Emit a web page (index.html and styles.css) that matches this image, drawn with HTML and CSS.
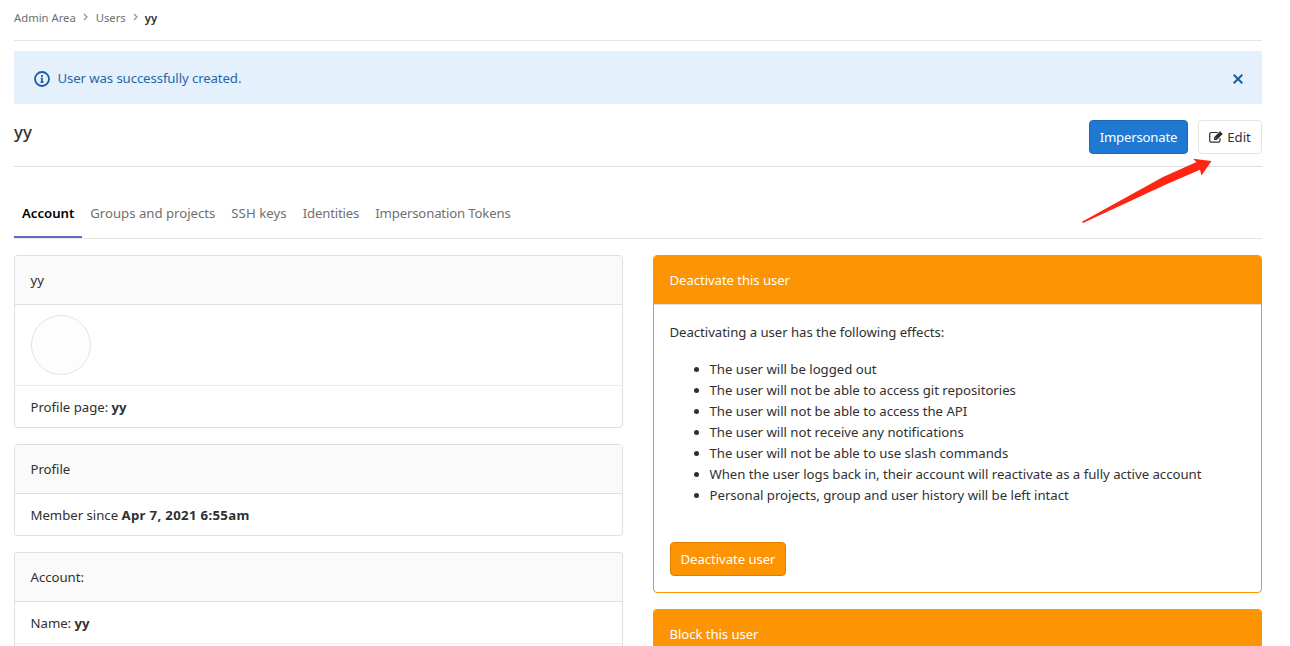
FILE: index.html
```
<!DOCTYPE html>
<html lang="en">
<head>
<meta charset="utf-8">
<title>yy · Users · Admin Area</title>
<link rel="stylesheet" href="styles.css">
</head>
<body>
<main class="page">
  <nav class="breadcrumbs">
    <a class="crumb">Admin Area</a>
    <svg class="chevron" viewBox="0 0 5 8"><path d="M1 1l3 3-3 3"/></svg>
    <a class="crumb">Users</a>
    <svg class="chevron" viewBox="0 0 5 8"><path d="M1 1l3 3-3 3"/></svg>
    <span class="crumb crumb-current">yy</span>
  </nav>
  <div class="alert">
    <svg class="info" viewBox="0 0 16 16"><circle cx="8" cy="8" r="7"/><path d="M8 4.1v1.8M6.8 7.5H8V11M6.6 11.2h2.8"/></svg>
    <span class="alert-text">User was successfully created.</span>
    <svg class="close" viewBox="0 0 12 12"><path d="M1.7 1.7l8.6 8.6M10.3 1.7l-8.6 8.6"/></svg>
  </div>
  <header class="title-bar">
    <h1 class="title">yy</h1>
    <div class="actions">
      <a class="btn btn-primary">Impersonate</a>
      <a class="btn btn-default"><svg class="pencil" viewBox="0 0 14 12"><path class="box" d="M11 7.2v2.3a1.7 1.7 0 0 1-1.7 1.7H2.4A1.7 1.7 0 0 1 .7 9.5V3.2A1.7 1.7 0 0 1 2.4 1.5H8.8"/><path class="pen" d="M11.1.3L13.8 2.9 7.7 9H5V6.3z"/><path class="nib" d="M6 6.6l1.3 1.3"/></svg>Edit</a>
      <svg class="arrow" viewBox="0 0 132 66"><path d="M1 63.800L82 19 115.500 4 112 .8 130.500 3 120.500 17.600 119 11.700 86 26 2 65z"/></svg>
    </div>
  </header>
  <nav class="tabs">
    <a class="tab active">Account</a>
    <a class="tab">Groups and projects</a>
    <a class="tab tab-wide">SSH keys</a>
    <a class="tab tab-tight">Identities</a>
    <a class="tab tab-tight">Impersonation Tokens</a>
  </nav>
  <div class="columns">
    <div class="column">
      <section class="card">
        <div class="card-header">yy</div>
        <div class="row row-avatar"><div class="avatar"></div></div>
        <div class="row row-last">Profile page: <b>yy</b></div>
      </section>
      <section class="card">
        <div class="card-header">Profile</div>
        <div class="row row-last">Member since <b class="date">Apr 7, 2021 6:55am</b></div>
      </section>
      <section class="card card-open">
        <div class="card-header">Account:</div>
        <div class="row">Name: <b>yy</b></div>
      </section>
    </div>
    <div class="column">
      <section class="card card-warning">
        <div class="card-header">Deactivate this user</div>
        <div class="card-body">
          <p class="intro">Deactivating a user has the following effects:</p>
          <ul class="effects">
            <li>The user will be logged out</li>
            <li>The user will not be able to access git repositories</li>
            <li>The user will not be able to access the API</li>
            <li>The user will not receive any notifications</li>
            <li>The user will not be able to use slash commands</li>
            <li>When the user logs back in, their account will reactivate as a fully active account</li>
            <li>Personal projects, group and user history will be left intact</li>
          </ul>
          <a class="btn btn-warning">Deactivate user</a>
        </div>
      </section>
      <section class="card card-warning card-open">
        <div class="card-header header-open">Block this user</div>
      </section>
    </div>
  </div>
</main>
</body>
</html>
```
FILE: styles.css
```
* { box-sizing: border-box; }
body {
  margin: 0;
  height: 646px;
  overflow: hidden;
  background: #fff;
  color: #303030;
  font-family: "Noto Sans", sans-serif;
  font-size: 13.2px;
  letter-spacing: -0.02px;
  line-height: 20px;
  white-space: nowrap;
}
.page { display: flex; flex-direction: column; width: 1248px; height: 646px; margin-left: 14px; }
svg { fill: none; flex: none; }

.breadcrumbs {
  display: flex;
  align-items: center;
  height: 41px;
  padding-bottom: 4px;
  border-bottom: 1px solid #e5e5e5;
  font-size: 11.3px;
  color: #707070;
}
.chevron { width: 5px; height: 8px; margin: 0 8px 3px 7px; stroke: #919191; stroke-width: 1.2; }
.crumb-current { margin-left: -1px; color: #303030; font-weight: 600; }

.alert {
  display: flex;
  align-items: center;
  height: 53px;
  margin-top: 10px;
  padding: 0 18px 0 20px;
  background: #e4f0fb;
  color: #2865a9;
}
.info { width: 16px; height: 16px; margin: 3px 7.5px 0 0; stroke: #1b5ca0; stroke-width: 1.8; }
.info path { stroke-width: 1.7; }
.alert-text { flex: 1; padding-top: 1px; letter-spacing: -0.1px; }
.close { width: 12px; height: 12px; margin-top: 2px; stroke: #1b5ca0; stroke-width: 2; }

.title-bar {
  display: flex;
  justify-content: space-between;
  height: 63px;
  padding-top: 16px;
  border-bottom: 1px solid #dfdfdf;
}
.title { margin: 0; font-size: 17px; line-height: 23px; font-weight: 500; color: #303030; }
.actions { position: relative; display: flex; gap: 10px; }
.btn {
  display: flex;
  align-items: center;
  justify-content: center;
  height: 34px;
  border: 1px solid;
  border-radius: 4px;
}
.btn-primary { width: 99px; background: #1f78d1; border-color: #1b69b6; color: #fff; letter-spacing: -0.2px; }
.btn-default { width: 64px; background: #fff; border-color: #e5e5e5; color: #303030; }
.btn-warning { width: 116px; background: #fc9403; border-color: #de7e00; color: #fff; letter-spacing: -0.08px; }
.pencil { width: 14px; height: 12px; margin-right: 4px; }
.pencil .box { stroke: #303030; stroke-width: 1.2; }
.pencil .pen { fill: #303030; }
.pencil .nib { stroke: #fff; stroke-width: .6; }
.arrow { position: absolute; right: 49px; top: 38px; width: 132px; height: 66px; fill: #ff2414; z-index: 1; }

.tabs { display: flex; height: 72px; padding-top: 21px; border-bottom: 1px solid #e5e5e5; color: #707070; }
.tab { display: block; padding: 15px 8px 0; height: 50px; }
.tab.active { color: #000; font-weight: 600; border-bottom: 2px solid #6666c4; }
.tab-wide { letter-spacing: 0.06px; }
.tab-tight { letter-spacing: -0.17px; }

.columns { flex: 1; display: grid; grid-template-columns: 609px 609px; gap: 30px; margin-top: 16px; }
.column { display: flex; flex-direction: column; gap: 16px; }
.card { border: 1px solid #dfdfdf; border-radius: 4px; overflow: hidden; }
.card-open { flex: 1; border-bottom: 0; border-radius: 4px 4px 0 0; }
.card-header { height: 49px; padding: 14px 15.5px 0; background: #fafafa; border-bottom: 1px solid #dfdfdf; }
.card-header.header-open { height: 36px; border-bottom: 0; }
.row { height: 42px; padding: 11px 15.5px 0; border-bottom: 1px solid #eee; }
.row-last { height: 41px; border-bottom: 0; }
.row-avatar { height: 81px; padding: 10px 16px 0; }
.avatar { width: 60px; height: 60px; border: 1px solid #e2e2e2; border-radius: 50%; background: #fdfdfd; }
b { font-weight: 700; }
.date { letter-spacing: 0.33px; }

.card-warning { border-color: #fc9403; }
.card-warning .card-header { background: #fc9403; color: #fff; letter-spacing: -0.08px; }
.card-body { height: 287px; padding: 17px 15.5px 0; }
.intro { margin: 0 0 16px; line-height: 21px; letter-spacing: -0.05px; }
.effects { margin: 0 0 36px; padding-left: 40px; line-height: 21px; letter-spacing: -0.02px; }
.card-body .btn { margin-left: .5px; }
```
